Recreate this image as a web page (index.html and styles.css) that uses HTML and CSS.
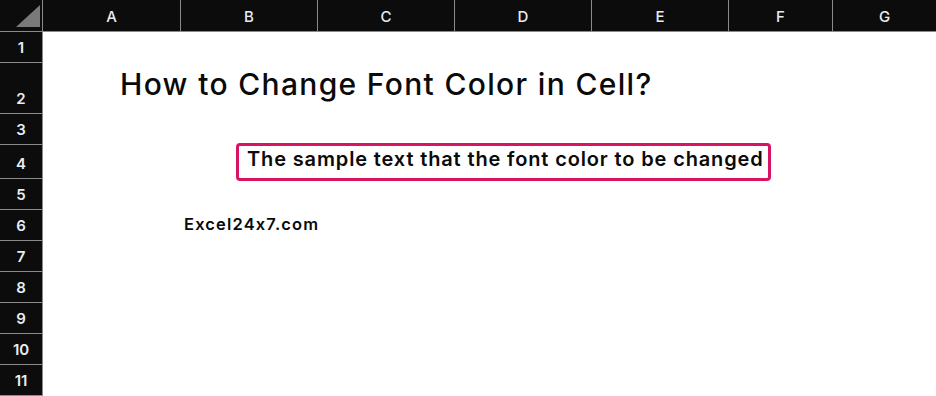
FILE: index.html
```html
<!DOCTYPE html>
<html lang="en">
<head>
<meta charset="utf-8">
<title>How to Change Font Color in Cell?</title>
<link rel="stylesheet" href="styles.css">
</head>
<body>
<div class="sheet">
  <div class="corner">
    <svg class="corner-tri" width="42" height="31" viewBox="0 0 42 31"><polygon points="40,5 40,27 16,27" fill="#7a7a7a"/></svg>
  </div>
  <div class="colheads">
    <div class="ch">A</div><div class="ch">B</div><div class="ch">C</div><div class="ch">D</div><div class="ch">E</div><div class="ch">F</div><div class="ch">G</div>
  </div>
  <div class="rowheads">
    <div class="rh">1</div>
    <div class="rh r-tall">2</div>
    <div class="rh">3</div>
    <div class="rh r-mid">4</div>
    <div class="rh">5</div>
    <div class="rh">6</div>
    <div class="rh">7</div>
    <div class="rh">8</div>
    <div class="rh">9</div>
    <div class="rh">10</div>
    <div class="rh">11</div>
  </div>
  <div class="cells">
    <div class="row"></div>
    <div class="row r-tall"><h1 class="title">How to Change Font Color in Cell?</h1></div>
    <div class="row"></div>
    <div class="row r-mid row-box"><div class="sample">The sample text that the font color to be changed</div></div>
    <div class="row"></div>
    <div class="row"><div class="site">Excel24x7.com</div></div>
    <div class="row"></div>
    <div class="row"></div>
    <div class="row"></div>
    <div class="row"></div>
    <div class="row"></div>
  </div>
</div>
</body>
</html>
```
FILE: styles.css
```css
* { box-sizing: border-box; }
html, body { margin: 0; padding: 0; }
body {
  background: #ffffff;
  font-family: Inter, "Noto Sans", "DejaVu Sans", sans-serif;
  font-feature-settings: "calt" 0;
  color: #111111;
}
.sheet {
  display: grid;
  grid-template-columns: 42px 1fr;
  grid-template-rows: 31px 1fr;
  gap: 1px;
  width: 936px;
  height: 396px;
  background: #8a8a8a;
  overflow: hidden;
}
.corner {
  background: #0c0c0c;
  display: flex;
}
.corner-tri { display: block; }
.colheads {
  display: grid;
  grid-template-columns: 137px 136px 136px 136px 136px 103px 1fr;
  gap: 1px;
  background: #8a8a8a;
}
.ch {
  background: #0c0c0c;
  color: #e8edf2;
  font-size: 15px;
  font-weight: 500;
  line-height: 1;
  display: flex;
  align-items: center;
  justify-content: center;
  padding-top: 1px;
}
.rowheads {
  display: flex;
  flex-direction: column;
  gap: 1px;
  background: #8a8a8a;
}
.rh {
  height: 30px;
  flex: none;
  background: #0c0c0c;
  color: #e8edf2;
  font-size: 15px;
  font-weight: 600;
  line-height: 1;
  display: flex;
  align-items: flex-end;
  justify-content: center;
  padding-bottom: 7px;
}
.cells {
  background: #ffffff;
  display: flex;
  flex-direction: column;
  gap: 1px;
}
.row {
  height: 30px;
  flex: none;
  display: flex;
  align-items: flex-start;
}
.rh.r-tall, .row.r-tall { height: 50px; }
.rh.r-mid, .row.r-mid { height: 33px; }
.title {
  margin: 0;
  padding: 6px 0 0 77px;
  font-size: 30px;
  font-weight: 500;
  line-height: 1;
  letter-spacing: 1.33px;
  color: #0a0a0a;
  white-space: nowrap;
}
.row-box { align-items: center; }
.sample {
  margin-left: 193px;
  height: 38px;
  flex: none;
  border: 3px solid #d81563;
  border-radius: 4px;
  padding: 3px 4px 0 8px;
  font-size: 20px;
  font-weight: 600;
  line-height: 20px;
  letter-spacing: 0.86px;
  color: #0a0a0a;
  white-space: nowrap;
}
.site {
  padding: 6px 0 0 141px;
  font-size: 16.5px;
  font-weight: 600;
  line-height: 1;
  letter-spacing: 1.15px;
  color: #0a0a0a;
}
```
